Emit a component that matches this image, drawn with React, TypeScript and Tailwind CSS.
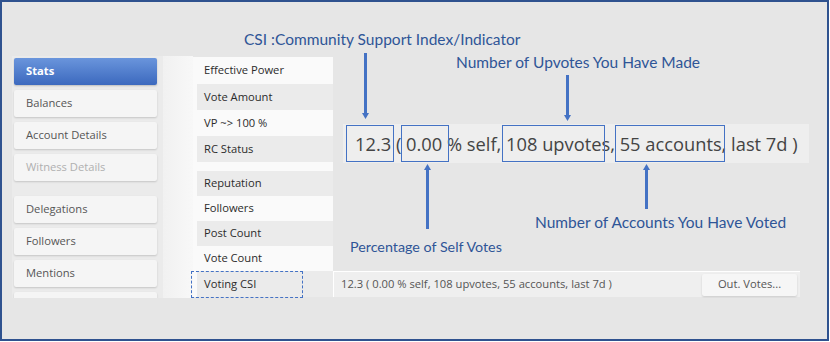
const sideTop = ["Balances", "Account Details"];
const sideBottom = ["Delegations", "Followers", "Mentions", ""];

const topRows = [
  { label: "Effective Power", h: "h-[27px]", gray: false },
  { label: "Vote Amount", h: "h-[26px]", gray: true },
  { label: "VP ~> 100 %", h: "h-[26px]", gray: false },
  { label: "RC Status", h: "h-[26px]", gray: true },
];

const lowRows = [
  { label: "Reputation", gray: true },
  { label: "Followers", gray: false },
  { label: "Post Count", gray: true },
  { label: "Vote Count", gray: false },
];

function SideItem({ label, muted }: { label: string; muted?: boolean }) {
  return (
    <div
      className={`flex h-[27px] w-[143px] shrink-0 items-center rounded-[2px] bg-[#f5f5f5] pl-[12px] shadow-[0_1px_2px_rgba(0,0,0,0.16)] ${
        muted ? "text-[#b0b0b0]" : "text-[#555]"
      }`}
    >
      {label}
    </div>
  );
}

// hand-drawn highlight rectangle over the enlarged value
function Box({ className }: { className: string }) {
  return <div className={`absolute top-[1px] h-[37px] border border-[#4472c4] ${className}`} />;
}

export default function App() {
  return (
    <div
      className="relative h-[341px] w-[829px] overflow-hidden bg-[#e6e6e6] shadow-[inset_0_0_0_2px_#2f528f]"
      style={{ fontFamily: '"Open Sans", "Noto Sans", sans-serif' }}
    >
      <div className="pl-[12px] pt-[56px]">
        <div className="flex h-[242px] overflow-hidden text-[11.2px]">
          {/* sidebar */}
          <div className="flex w-[151px] flex-col gap-[5px] bg-[#ebebeb] pl-[2px] pt-[2px]">
            <div className="flex h-[27px] w-[143px] shrink-0 items-center rounded-[2px] bg-gradient-to-b from-[#6a95dc] to-[#3c69be] pl-[12px] font-bold text-white shadow-[0_1px_2px_rgba(0,0,0,0.2)]">
              Stats
            </div>
            {sideTop.map((s) => (
              <SideItem key={s} label={s} />
            ))}
            <SideItem label="Witness Details" muted />
            <div className="h-[5px] shrink-0" />
            {sideBottom.map((s, i) => (
              <SideItem key={i} label={s} />
            ))}
          </div>
          <div className="w-[30px] bg-gradient-to-r from-[#f1f1f1] to-[#f8f8f8]" />

          {/* stats table */}
          <div className="flex flex-col pt-[1px] font-medium text-[#2b2b2b]">
            <div className="w-[140px] bg-[#fafafa] pl-[4px]">
              {topRows.map((r) => (
                <div
                  key={r.label}
                  className={`flex items-center pl-[7px] ${r.h} ${r.gray ? "bg-[#ebebeb]" : ""}`}
                >
                  {r.label}
                </div>
              ))}
              <div className="h-[9px]" />
              {lowRows.map((r) => (
                <div
                  key={r.label}
                  className={`flex h-[25px] items-center pl-[7px] ${r.gray ? "bg-[#ebebeb]" : ""}`}
                >
                  {r.label}
                </div>
              ))}
            </div>
            <div className="flex">
              <div className="w-[140px] bg-[#fafafa] pl-[4px]">
                <div className="flex h-[26px] items-center bg-[#ebebeb] pl-[7px]">Voting CSI</div>
              </div>
              <div className="flex h-[26px] w-[467px] items-center justify-between border-l border-t border-white bg-[#efefef] pl-[7px] pr-[3px] font-normal text-[#555]">
                <span>12.3 ( 0.00 % self, 108 upvotes, 55 accounts, last 7d )</span>
                <button className="flex h-[22px] w-[95px] items-center justify-center rounded-[2px] bg-[#f6f6f6] text-[#555] shadow-[0_1px_2px_rgba(0,0,0,0.15)]">
                  Out. Votes...
                </button>
              </div>
            </div>
          </div>
        </div>
      </div>

      {/* annotations */}
      <div className="absolute left-[191px] top-[271px] h-[27px] w-[112px] border border-dashed border-[#4472c4]" />

      <div className="absolute left-[343px] top-[124px] flex h-[39px] w-[466px] items-center whitespace-nowrap bg-[#eeeeee] pl-[12px] text-[18.3px] text-[#444]">
        12.3 ( 0.00 % self, 108 upvotes, 55 accounts, last 7d )
        <Box className="left-[3px] w-[48px]" />
        <Box className="left-[58px] w-[48px]" />
        <Box className="left-[159px] w-[103px]" />
        <Box className="left-[272px] w-[110px]" />
      </div>

      <div
        className="absolute inset-0 text-[15.5px] leading-none text-[#2f5597]"
        style={{ fontFamily: 'Lato, "Open Sans", sans-serif' }}
      >
        <div className="absolute left-[244px] top-[32px]">CSI :Community Support Index/Indicator</div>
        <div className="absolute left-[456px] top-[55px]">Number of Upvotes You Have Made</div>
        <div className="absolute left-[535px] top-[215px]">Number of Accounts You Have Voted</div>
        <div className="absolute left-[350px] top-[240px] text-[14.3px]">Percentage of Self Votes</div>
      </div>

      <svg className="absolute inset-0" width="829" height="341" viewBox="0 0 829 341">
        <g stroke="#4472c4" strokeWidth="3">
          <line x1="365.5" y1="53" x2="365.5" y2="114" />
          <line x1="567.5" y1="75" x2="567.5" y2="116" />
          <line x1="427.5" y1="229" x2="427.5" y2="169" />
          <line x1="646.5" y1="209" x2="646.5" y2="169" />
        </g>
        <g fill="#4472c4">
          <polygon points="362,113 369,113 365.5,119" />
          <polygon points="564,115 571,115 567.5,121" />
          <polygon points="424,170 431,170 427.5,164" />
          <polygon points="643,170 650,170 646.5,164" />
        </g>
      </svg>
    </div>
  );
}
